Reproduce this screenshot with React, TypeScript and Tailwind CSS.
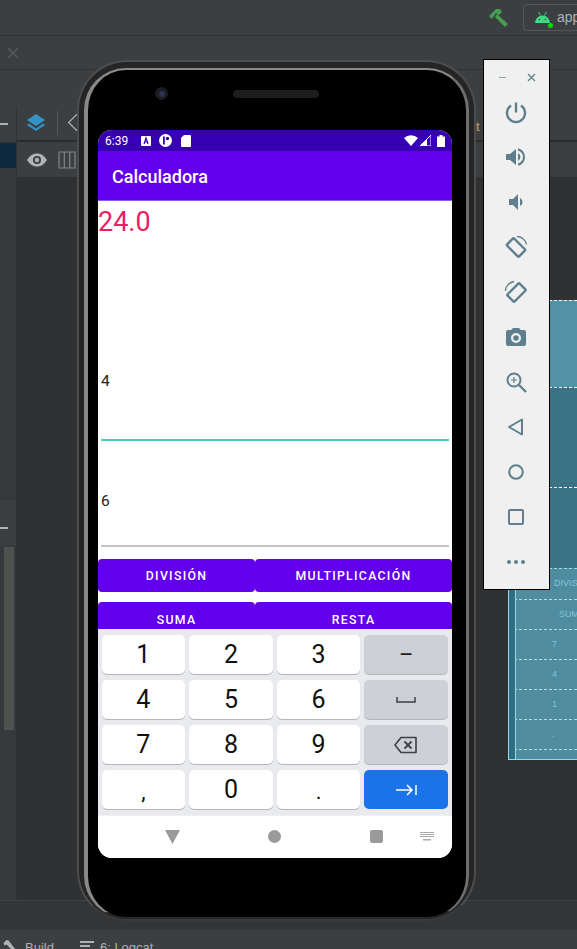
const KEY_ROWS = [
  ['1', '2', '3', 'minus'],
  ['4', '5', '6', 'space'],
  ['7', '8', '9', 'del'],
  [',', '0', '.', 'next'],
];

const BLUE_ROWS = [
  { label: 'SUMA', cls: 'pl-[50px]' },
  { label: '7', cls: 'pl-[43px]' },
  { label: '4', cls: 'pl-[43px]' },
  { label: '1', cls: 'pl-[43px]' },
  { label: '.', cls: 'pl-[43px]' },
];

function Glyph({ d, size = 24 }: { d: string; size?: number }) {
  return (
    <svg width={size} height={size} viewBox="0 0 24 24" fill="#5f7f8e">
      <path d={d} />
    </svg>
  );
}

function SideToolbar() {
  const stroke = { fill: 'none', stroke: '#5f7f8e', strokeWidth: 2 };
  return (
    <div className="absolute left-[483px] top-[59px] flex h-[531px] w-[67px] flex-col items-center border border-black bg-[#f0f0f0]">
      <div className="flex h-[35px] w-full items-center justify-between pl-[15px] pr-[13px]">
        <div className="h-[1px] w-[7px] bg-[#8fa5b0]" />
        <svg width="9" height="9" viewBox="0 0 9 9" stroke="#5f7f8e" strokeWidth="1.3">
          <path d="M1 1l7 7M8 1l-7 7" />
        </svg>
      </div>
      <div className="-ml-[2px] flex flex-col items-center gap-[21px] pt-[5px]">
        <svg width="24" height="24" viewBox="0 0 24 24" {...stroke} strokeWidth="2.4">
          <path d="M12 2.5v10" />
          <path d="M7 5.6a9 9 0 1 0 10 0" />
        </svg>
        <svg width="24" height="24" viewBox="0 0 24 24" fill="#5f7f8e">
          <path d="M2 9v6h4l6 5V4L6 9H2z" />
          <path d="M14 8a4.5 4.5 0 0 1 0 8z" />
          <path d="M14 3.2v2.4c3 .9 5 3.400 5 6.400s-2 5.500-5 6.400v2.400c4.200-.9 7-4.500 7-8.800s-2.800-7.900-7-8.800z" />
        </svg>
        <Glyph d="M18.500 12c0-1.770-1.020-3.290-2.500-4.030v8.050c1.480-.73 2.500-2.250 2.500-4.020zM5 9v6h4l5 5V4L9 9H5z" />
        <svg width="24" height="24" viewBox="0 0 24 24" {...stroke} strokeWidth="2.4">
          <rect x="3.500" y="7.500" width="17" height="10" rx="1" transform="rotate(45 12 12.500)" />
          <path d="M13 1.500c4.500 0 8.500 3.500 9.500 8" strokeWidth="1.300" />
        </svg>
        <svg width="24" height="24" viewBox="0 0 24 24" {...stroke} strokeWidth="2.4">
          <rect x="4" y="7.500" width="17" height="10" rx="1" transform="rotate(-45 12.500 12.500)" />
          <path d="M1.500 11c0-4.500 3.500-8.500 8.500-9.500" strokeWidth="1.300" />
        </svg>
        <Glyph d="M4 5h3.200L9 3h6l1.800 2H20a2 2 0 0 1 2 2v12a2 2 0 0 1-2 2H4a2 2 0 0 1-2-2V7a2 2 0 0 1 2-2zm8 13a5 5 0 1 0 0-10 5 5 0 0 0 0 10zm0-2.200a2.800 2.800 0 1 1 0-5.600 2.800 2.800 0 0 1 0 5.600z" />
        <svg width="24" height="24" viewBox="0 0 24 24" {...stroke}>
          <circle cx="10" cy="10" r="6.500" />
          <path d="M15 15l7 7" strokeWidth="2.400" />
          <path d="M10 7v6M7 10h6" strokeWidth="1.200" />
        </svg>
        <svg width="24" height="24" viewBox="0 0 24 24" {...stroke}>
          <path d="M18 4.500v15L5 12z" strokeLinejoin="round" />
        </svg>
        <svg width="24" height="24" viewBox="0 0 24 24" {...stroke}>
          <circle cx="12" cy="12" r="6.800" />
        </svg>
        <svg width="24" height="24" viewBox="0 0 24 24" {...stroke}>
          <rect x="5" y="5" width="14" height="14" rx="1" />
        </svg>
        <svg width="24" height="24" viewBox="0 0 24 24" fill="#5f7f8e">
          <circle cx="5" cy="12" r="2" />
          <circle cx="12" cy="12" r="2" />
          <circle cx="19" cy="12" r="2" />
        </svg>
      </div>
    </div>
  );
}

function Blueprint() {
  return (
    <div className="absolute left-[508px] top-[300px] flex h-[460px] w-[69px] flex-col border-b border-l border-[#8fdcec] bg-[#4f8c9f] font-['Liberation_Sans',sans-serif] text-[9px] text-[#7fc5d8]">
      <div className="h-[87px] border-t border-dashed border-white bg-[#5192a6]" />
      <div className="h-[100px] border-t border-dashed border-white bg-[#3c7285]" />
      <div className="h-[81px] border-t border-dashed border-white bg-[#3c7285]" />
      <div className="flex h-[31px] items-center border-t border-dashed border-[#8fdcec] pl-[45px]">DIVISIÓN</div>
      {BLUE_ROWS.map((r) => (
        <div key={r.label} className={`flex h-[30px] items-center border-t border-dashed border-[#a5e3f0] ${r.cls}`}>
          {r.label}
        </div>
      ))}
      <div className="flex-1 border-t border-dashed border-[#a5e3f0]" />
      <div className="absolute bottom-0 left-0 top-[285px] w-[7px] border-r border-[#8fdcec] bg-[#2f6d80]" />
    </div>
  );
}

function StatusBar() {
  return (
    <div className="flex h-[21px] items-center bg-[#3700b3] px-[7px] text-[12px] text-white">
      <span>6:39</span>
      <svg className="ml-[13px]" width="10" height="10" viewBox="0 0 10 10">
        <rect width="10" height="10" rx="1" fill="#fff" />
        <path d="M3 8l2-6 2 6M3.800 6h2.400" stroke="#3700b3" strokeWidth="1.200" fill="none" />
      </svg>
      <svg className="ml-[8px]" width="13" height="13" viewBox="0 0 13 13">
        <circle cx="6.500" cy="6.500" r="6.500" fill="#fff" />
        <rect x="4" y="2.500" width="1.800" height="8" fill="#3700b3" />
        <circle cx="8.500" cy="4.500" r="1.700" fill="#3700b3" />
      </svg>
      <svg className="ml-[9px]" width="10" height="12" viewBox="0 0 10 12">
        <path d="M3 0h6a1 1 0 0 1 1 1v10a1 1 0 0 1-1 1H1a1 1 0 0 1-1-1V3z" fill="#fff" />
      </svg>
      <div className="ml-auto flex items-center gap-[2px]">
        <svg width="14" height="11" viewBox="0 0 14 11">
          <path d="M0 3a10 10 0 0 1 14 0l-7 8z" fill="#fff" />
        </svg>
        <svg width="11" height="11" viewBox="0 0 11 11">
          <path d="M11 0v11H0z" fill="none" stroke="#fff" strokeWidth="1" />
          <path d="M7 4v7H0L7 4z" fill="#fff" />
        </svg>
        <svg className="ml-[4px]" width="8" height="12" viewBox="0 0 8 12">
          <path d="M2.500 0h3v1.500H8V12H0V1.500h2.500z" fill="#fff" />
        </svg>
      </div>
    </div>
  );
}

function ActionButton({ label, className }: { label: string; className: string }) {
  return (
    <button className={`flex h-[33px] items-center justify-center rounded-[4px] bg-[#6200ee] text-[12.3px] font-medium tracking-[1.3px] text-white ${className}`}>
      {label}
    </button>
  );
}

function KeyContent({ k }: { k: string }) {
  if (k === 'minus') return <span className="text-[22px] text-[#202124]">–</span>;
  if (k === 'space') {
    return (
      <svg width="20" height="8" viewBox="0 0 20 8" fill="none" stroke="#3c4043" strokeWidth="1.500">
        <path d="M1 1v5h18V1" />
      </svg>
    );
  }
  if (k === 'del') {
    return (
      <svg width="24" height="18" viewBox="0 0 24 18" fill="none" stroke="#3c4043" strokeWidth="1.600">
        <path d="M7 1.500h15v15H7L1 9z" strokeLinejoin="round" />
        <path d="M10.500 5.500l7 7M17.500 5.500l-7 7" strokeWidth="1.800" />
      </svg>
    );
  }
  if (k === 'next') {
    return (
      <svg width="21" height="12" viewBox="0 0 21 12" fill="none" stroke="#fff" strokeWidth="1.500">
        <path d="M0 6h16M11 1l5 5-5 5M20 1v10" />
      </svg>
    );
  }
  if (k === ',' || k === '.') {
    return <span className="mt-[5px] text-[22px] leading-none text-[#111]">{k}</span>;
  }
  return <span className="text-[25px] leading-none text-[#111]">{k}</span>;
}

function Keyboard() {
  return (
    <div className="flex h-[186px] flex-col gap-[6px] bg-[#e8eaed] pl-[3.500px] pr-[4px] pt-[6px]">
      {KEY_ROWS.map((row) => (
        <div key={row[0]} className="grid grid-cols-4 gap-[4px]">
          {row.map((k) => {
            let tone = 'bg-white shadow-[0_1px_0_#b4b6ba]';
            if (k === 'minus' || k === 'space' || k === 'del') tone = 'bg-[#cdd0d6] shadow-[0_1px_0_#b4b6ba]';
            if (k === 'next') tone = 'bg-[#1a73e8]';
            return (
              <div key={k} className={`flex h-[39px] items-center justify-center rounded-[5px] ${tone}`}>
                <KeyContent k={k} />
              </div>
            );
          })}
        </div>
      ))}
    </div>
  );
}

function NavBar() {
  return (
    <div className="flex h-[43px] items-center border-t border-[#f0f0f0] bg-white pb-[1px]">
      <svg className="ml-[67px]" width="15" height="14" viewBox="0 0 15 14">
        <path d="M0 0h15L7.500 14z" fill="#9a9a9a" />
      </svg>
      <div className="ml-[88px] h-[13px] w-[13px] rounded-full bg-[#9a9a9a]" />
      <div className="ml-[89px] h-[13px] w-[13px] rounded-[2px] bg-[#9a9a9a]" />
      <svg className="ml-[37px]" width="14" height="9" viewBox="0 0 14 9" fill="#aaa">
        <path d="M0 0h14v1H0zM0 2h14v1H0zM0 4h14v1H0zM3 7h8v1.500H3z" />
      </svg>
    </div>
  );
}

function Phone() {
  return (
    <div className="absolute left-[77px] top-[60px] h-[861px] w-[399px] rounded-[50px] border-2 border-[#4d4d4d] border-b-[#3a3a3a] bg-[#252525] px-[5px] pb-[1px] pt-[6px]">
      <div className="h-full rounded-[42px] border-b border-l-4 border-r-[3px] border-t-2 border-b-[#2a2a2a] border-l-[#888] border-r-[#6e6e6e] border-t-[#8a8a8a] bg-black pl-[10px]">
        <div className="flex h-[60px] items-start pt-[17px]">
          <div className="ml-[57px] flex h-[13px] w-[13px] items-center justify-center rounded-full bg-[#1c1c22]">
            <div className="h-[6px] w-[6px] rounded-full bg-[#2e3350]" />
          </div>
          <div className="ml-[65px] mt-[3px] h-[8px] w-[86px] rounded-full bg-[#1d1d1d]" />
        </div>
        <div className="flex h-[728px] w-[354px] flex-col overflow-hidden rounded-[14px] bg-white font-['Roboto',sans-serif]">
          <StatusBar />
          <div className="flex h-[50px] items-center border-b border-[#8a5ae8] bg-[#6200ee] pl-[14px] pt-[2px] text-[18px] font-medium text-white">
            Calculadora
          </div>
          <div className="flex h-[428px] flex-col overflow-hidden">
            <div className="h-[42px] shrink-0 text-[27px] leading-[42px] text-[#e91e63]">24.0</div>
            <div className="mx-[3px] mt-[126px] h-[72px] shrink-0 border-b-2 border-[#4ecdb8]">
              <span className="text-[15.500px] leading-[20px] text-[#222]">4</span>
            </div>
            <div className="mx-[3px] mt-[50px] h-[56px] shrink-0 border-b-2 border-[#c4c4c4] text-[15.500px] leading-[20px] text-[#222]">
              6
            </div>
            <div className="mt-[12px] flex shrink-0">
              <ActionButton label="DIVISIÓN" className="w-[157px] pt-[1px]" />
              <ActionButton label="MULTIPLICACIÓN" className="flex-1 pt-[1px]" />
            </div>
            <div className="mt-[10px] flex shrink-0">
              <ActionButton label="SUMA" className="w-[157px] pt-[3px]" />
              <ActionButton label="RESTA" className="flex-1 pt-[3px]" />
            </div>
          </div>
          <Keyboard />
          <NavBar />
        </div>
      </div>
    </div>
  );
}

function IdeBackground() {
  return (
    <div className="flex h-full flex-col bg-[#3c3f41] font-['Liberation_Sans',sans-serif] text-[#aeb0b2]">
      <div className="flex h-[36px] shrink-0 items-start justify-end border-b border-[#323232]">
        <svg className="mr-[14px] mt-[8px]" width="20" height="20" viewBox="0 0 20 20" fill="#499c54">
          <path d="M0 8l7-7h4l2 3-3 3-3-2-4 6z" />
          <path d="M8 6l11 10-3 3L6 9z" />
        </svg>
        <div className="relative mt-[4px] flex h-[27px] w-[54px] items-center gap-[6px] rounded-l-[4px] border border-r-0 border-[#555] pl-[10px] text-[14px]">
          <svg width="17" height="13" viewBox="0 0 17 13" className="shrink-0">
            <path d="M1 12a7.500 7.500 0 0 1 15 0z" fill="#3ddc84" />
            <path d="M4.500 1l2 3.500M12.500 1l-2 3.500" stroke="#3ddc84" />
            <circle cx="5.500" cy="8.500" r="0.800" fill="#3c3f41" />
            <circle cx="11.500" cy="8.500" r="0.800" fill="#3c3f41" />
          </svg>
          <div className="absolute left-[24px] top-[18px] h-[5px] w-[5px] rounded-full bg-[#00e000]" />
          app
        </div>
      </div>
      <div className="flex h-[34px] shrink-0 items-center border-b border-[#323232] pl-[8px]">
        <svg width="10" height="10" viewBox="0 0 10 10" stroke="#5d6063" strokeWidth="1.200">
          <path d="M0 0l10 10M10 0L0 10" />
        </svg>
      </div>
      <div className="h-[36px] shrink-0" />
      <div className="flex min-h-0 flex-1">
        <div className="flex w-[17px] shrink-0 flex-col border-r border-[#323232]">
          <div className="flex h-[37px] items-center border-b border-[#323232]">
            <div className="h-[2px] w-[8px] bg-[#afb1b3]" />
          </div>
          <div className="h-[25px] bg-[#0d293e]" />
          <div className="h-[332px] bg-[#35393b]" />
          <div className="h-[10px] bg-[#3a3e40]" />
          <div className="flex h-[35px] items-center bg-[#3c3f41]">
            <div className="h-[2px] w-[8px] bg-[#afb1b3]" />
          </div>
          <div className="flex-1 bg-[#35393b] pl-[4px] pt-[2px]">
            <div className="h-[183px] w-[10px] bg-[#50524f]" />
          </div>
        </div>
        <div className="flex min-w-0 flex-1 flex-col">
          <div className="flex h-[36px] items-center border-b-2 border-[#2b2b2b] pl-[9px]">
            <svg width="20" height="20" viewBox="0 0 20 20" fill="#3592c4">
              <path d="M10 1l9 6-9 6-9-6z" />
              <path d="M3 10.500l7 5 7-5 2 1.500-9 6-9-6z" />
            </svg>
            <div className="ml-[11px] h-[24px] w-[1px] bg-[#55585a]" />
            <svg className="ml-[10px]" width="18" height="18" viewBox="0 0 18 18" fill="none" stroke="#afb1b3" strokeWidth="1.200">
              <rect x="3" y="3" width="11" height="11" transform="rotate(45 8.500 8.500)" />
            </svg>
          </div>
          <div className="flex h-[35px] items-center pl-[10px]">
            <svg width="20" height="14" viewBox="0 0 20 14">
              <path d="M0 7c3-4.500 6-6.500 10-6.500S17 2.500 20 7c-3 4.500-6 6.500-10 6.500S3 11.500 0 7z" fill="#afb1b3" />
              <circle cx="10" cy="7" r="4" fill="#3c3f41" />
              <circle cx="10" cy="7" r="2.200" fill="#afb1b3" />
            </svg>
            <svg className="ml-[11px]" width="18" height="18" viewBox="0 0 18 18" fill="none" stroke="#7f8588" strokeWidth="1.200">
              <path d="M1 1h16v16H1zM6.300 1v16M11.700 1v16" />
            </svg>
          </div>
          <div className="min-h-0 flex-1 bg-[#2f3133]" />
        </div>
      </div>
      <div className="h-[30px] shrink-0 border-t border-[#3e4143] bg-[#333638]" />
      <div className="flex h-[19px] shrink-0 items-start gap-[25px] overflow-hidden pl-[2px] pt-[11px] text-[13px] leading-[14px]">
        <span className="flex items-center gap-[8px]">
          <svg width="15" height="14" viewBox="0 0 14 14" fill="#afb1b3" className="-mt-[4px]">
            <path d="M1 4l3-3 2 .5 7 9-2 2-7-7-2 1z" />
          </svg>
          Build
        </span>
        <span className="flex items-center gap-[6px]">
          <svg width="15" height="12" viewBox="0 0 15 12" fill="#afb1b3" className="-mt-[4px]">
            <path d="M1 1h14v2H1zM1 5h10v2H1zM1 9h6v2H1z" />
          </svg>
          6: Logcat
        </span>
      </div>
    </div>
  );
}

export default function App() {
  return (
    <div className="relative h-[949px] w-[577px] overflow-hidden">
      <IdeBackground />
      <span className="absolute left-[476px] top-[117px] font-['Liberation_Sans',sans-serif] text-[13px] text-[#c9a26d]">t</span>
      <Blueprint />
      <Phone />
      <SideToolbar />
    </div>
  );
}
